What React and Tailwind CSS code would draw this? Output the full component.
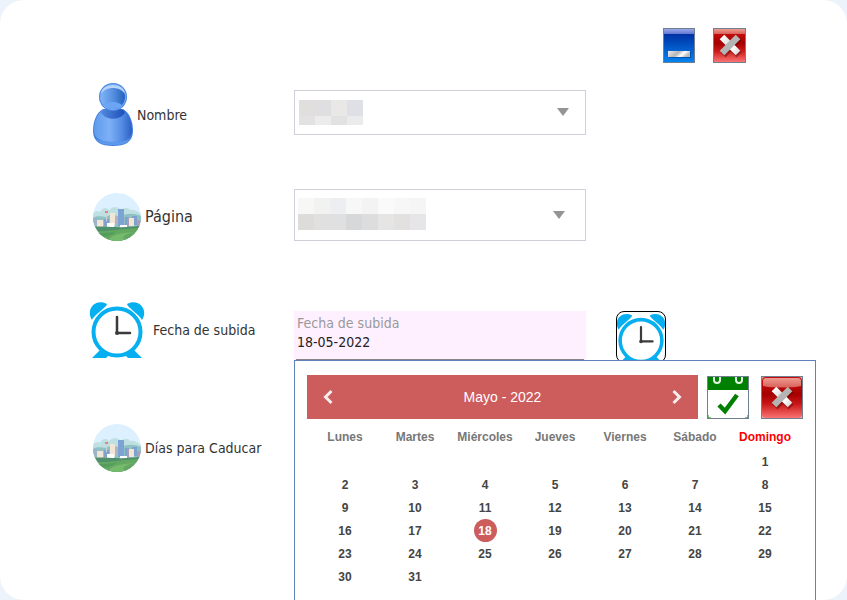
import React from "react";

const WEEKDAYS = ["Lunes", "Martes", "Miércoles", "Jueves", "Viernes", "Sábado", "Domingo"];

const WEEKS = [
  [null, null, null, null, null, null, 1],
  [2, 3, 4, 5, 6, 7, 8],
  [9, 10, 11, 12, 13, 14, 15],
  [16, 17, 18, 19, 20, 21, 22],
  [23, 24, 25, 26, 27, 28, 29],
  [30, 31, null, null, null, null, null],
];

const SELECTED_DAY = 18;

function PersonIcon() {
  return (
    <svg className="h-16 w-11 shrink-0" viewBox="0 0 44 64" aria-hidden="true">
      <defs>
        <linearGradient id="body" x1="0" x2="1">
          <stop offset="0" stopColor="#5f9bee" />
          <stop offset="0.4" stopColor="#7db0f6" />
          <stop offset="0.7" stopColor="#5990e6" />
          <stop offset="1" stopColor="#2a60c4" />
        </linearGradient>
        <linearGradient id="neck" x1="0" x2="1">
          <stop offset="0" stopColor="#5289df" />
          <stop offset="1" stopColor="#1c4fb8" />
        </linearGradient>
        <linearGradient id="face" x1="0" x2="1">
          <stop offset="0" stopColor="#7db2f7" />
          <stop offset="0.5" stopColor="#5590e0" />
          <stop offset="1" stopColor="#2560bd" />
        </linearGradient>
      </defs>
      <path d="M14 26C7 30 4 39 4 48c0 11 8 15 20 15s20-4 20-15c0-9-3-18-10-22Z" fill="#4580de" />
      <path d="M14 27C8 31 5 39 5 48c0 8 8 11 19 11s19-3 19-11c0-9-3-17-9-21Z" fill="url(#body)" />
      <path d="M7 56c6 4 28 4 34 0-3 5-9 6-17 6s-14-1-17-6Z" fill="#5c98ec" />
      <path d="M14 27c5-2 15-2 20 0 3 2 2 3 0 5-5 5-15 5-20 0-2-2-3-3 0-5Z" fill="url(#neck)" />
      <circle cx="24" cy="14" r="14" fill="#4a86e0" />
      <circle cx="24" cy="14" r="13" fill="#78adf5" />
      <circle cx="24" cy="14" r="12" fill="url(#face)" />
      <path d="M12 11C13-1 35-1 36 11 31 3 17 3 12 11Z" fill="#b5d5fd" />
      <path d="M15 22c5-4 13-4 18 0-4 5-14 5-18 0Z" fill="#6ba6f6" />
    </svg>
  );
}

function CityIcon({ clip }) {
  return (
    <svg className="h-12 w-[52px] shrink-0" viewBox="0 0 52 48" aria-hidden="true">
      <clipPath id={clip}>
        <circle cx="28" cy="24" r="24" />
      </clipPath>
      <g clipPath={`url(#${clip})`}>
        <path d="M4 0h48v48H4z" fill="#ddf0ff" />
        <path d="M4 20c3-2 5-3 7-1 2-5 7-5 9-2 4-4 8-4 12 0 4-3 7-3 9 0 4-1 7 1 11 4v14H4Z" fill="#bfe0e2" />
        <path d="M4 25c5-3 9-1 13-1 5-3 9-2 14 0 6-4 14-4 21-1v12H4Z" fill="#8fc2c2" />
        <path d="M4 25h4v9H4z" fill="#9bb4c8" />
        <path d="M12 28h6v6h-6z" fill="#c3b3ab" />
        <path d="M15 26h5v7h-5zM36 24h4v9h-4zM43 23h5v9h-5z" fill="#7fa1d0" />
        <path d="M38 25h3v9h-3zM48 27h4v8h-4z" fill="#a8a0b4" />
        <path d="M8 27h6v7H8zM21 20h5v13h-5zM40 25h5v8h-5z" fill="#f1e6d5" />
        <path d="M26 23h3v8h-3z" fill="#b5b4bd" />
        <path d="M29 16h6v17h-6z" fill="#7da3d5" />
        <path d="M17 19h1v9h-1z" fill="#c8d4da" />
        <path d="M16 18h3v2h-3z" fill="#e9827c" />
        <path d="M18 30h7v4h-7zM31 32h7v3h-7z" fill="#fff" />
        <path d="M4 34c8-1 14 0 24 0 8 1 16-1 24-1v15H4Z" fill="#4f8f6b" />
        <path d="M4 38c14 1 32-3 48-3v13H4Z" fill="#62a860" />
        <path d="M20 46c4-5 14-6 26-7-10 2-14 4-10 9H20Z" fill="#76ba6b" />
        <path d="M4 40c12 0 18 0 24-2-6 6-14 6-22 5Z" fill="#549d5b" />
      </g>
    </svg>
  );
}

function ClockArt() {
  return (
    <>
      <g fill="#06aff0">
        <path d="M3 19C-4 8 7-3 18 3 18 6 5 14 3 19Z" />
        <path d="M53 19C60 8 49-3 38 3 38 6 51 14 53 19Z" />
        <path d="M12 48 3 57h14l4-4ZM44 48l9 9H39l-4-4Z" />
      </g>
      <circle cx="28" cy="31" r="23.500" fill="#fff" stroke="#06aff0" strokeWidth="4" />
      <path d="M28 16v16h13" fill="none" stroke="#3b3b3d" strokeWidth="2.500" strokeLinecap="round" strokeLinejoin="round" />
      <circle cx="28" cy="32" r="2" fill="#3b3b3d" />
    </>
  );
}

function ClockIcon() {
  return (
    <svg className="h-[58px] w-[60px] shrink-0" viewBox="0 0 60 58" aria-hidden="true">
      <ClockArt />
    </svg>
  );
}

function RedGradients({ id }) {
  return (
    <defs>
      <linearGradient id={id} x2="0" y2="1">
        <stop offset="0.16" stopColor="#c30b0b" />
        <stop offset="0.42" stopColor="#a50000" />
        <stop offset="0.65" stopColor="#c81616" />
        <stop offset="1" stopColor="#fb7272" />
      </linearGradient>
      <linearGradient id={`${id}-gloss`} x2="0" y2="1">
        <stop offset="0" stopColor="#ef9a90" />
        <stop offset="1" stopColor="#d8625a" />
      </linearGradient>
      <linearGradient id={`${id}-light`} x2="1" y2="1">
        <stop offset="0" stopColor="#fff" />
        <stop offset="0.35" stopColor="#e2e2e2" />
        <stop offset="0.7" stopColor="#fff" />
        <stop offset="1" stopColor="#dcdcdc" />
      </linearGradient>
    </defs>
  );
}

/* Metal cross centred on the origin, 22 units wide. */
function MetalCross({ id }) {
  return (
    <>
      <path d="m-7 -7 16 17M9-7-7 10" stroke="#5e0000" strokeOpacity="0.45" strokeWidth="7" />
      <path d="M-8-8 8 8" stroke={`url(#${id}-light)`} strokeWidth="6.500" />
      <path d="M8-8-8 8" stroke="#b4b4b4" strokeWidth="6.500" />
    </>
  );
}

function CloseArt() {
  return (
    <svg className="block h-full w-full" viewBox="0 0 31 33" aria-hidden="true">
      <RedGradients id="close" />
      <path d="M0 0h31v33H0z" fill="url(#close)" />
      <path d="M0 0h31v5H0z" fill="url(#close-gloss)" />
      <g transform="translate(16 16)">
        <MetalCross id="close" />
      </g>
    </svg>
  );
}

function CancelArt() {
  return (
    <svg className="block h-full w-full" viewBox="0 0 40 41" aria-hidden="true">
      <RedGradients id="cancel" />
      <path d="M0 0h40v41H0z" fill="#e3a9a7" />
      <rect width="40" height="41" rx="4" fill="url(#cancel)" />
      <path d="M4 1h32c2 0 3 1 3 3v5c-8 2-30 2-38 0V4c0-2 1-3 3-3Z" fill="url(#cancel-gloss)" />
      <g transform="translate(20 20)">
        <MetalCross id="cancel" />
      </g>
    </svg>
  );
}

function MinimizeArt() {
  return (
    <svg className="block h-full w-full" viewBox="0 0 30 33" preserveAspectRatio="none" aria-hidden="true">
      <defs>
        <linearGradient id="min" x2="0" y2="1">
          <stop offset="0.15" stopColor="#0031a5" />
          <stop offset="1" stopColor="#0583ee" />
        </linearGradient>
        <linearGradient id="min-gloss" x2="0" y2="1">
          <stop offset="0" stopColor="#98a6ea" />
          <stop offset="1" stopColor="#6478d0" />
        </linearGradient>
        <linearGradient id="min-bar" x2="1" y2="0.300">
          <stop offset="0" stopColor="#eee" />
          <stop offset="0.5" stopColor="#b5b5b5" />
          <stop offset="0.75" stopColor="#fff" />
          <stop offset="1" stopColor="#bbb" />
        </linearGradient>
      </defs>
      <path d="M0 0h30v33H0z" fill="url(#min)" />
      <path d="M0 0h30v5H0z" fill="url(#min-gloss)" />
      <path d="M5 23h22v6H5z" fill="#003d91" fillOpacity="0.6" />
      <path d="M4 22h22v6H4z" fill="url(#min-bar)" />
    </svg>
  );
}

function CalendarCheckArt() {
  return (
    <svg className="block h-full w-full" viewBox="0 0 40 41" aria-hidden="true">
      <path d="M0 0h40v41H0z" fill="#fff" />
      <path d="M0 0h40v13H0z" fill="#008000" />
      <path d="M6 0v3a3 3 0 0 0 6 0V0M28 0v3a3 3 0 0 0 6 0V0" fill="none" stroke="#e3f3e3" strokeWidth="2" />
      <path d="m11 28 6 6L29 18" fill="none" stroke="#008000" strokeWidth="4.500" />
      <path d="M0 38v3h3M37 41h3v-3" fill="none" stroke="#008000" strokeWidth="1" />
    </svg>
  );
}

function Combo({ id, className, arrowClassName, children }) {
  return (
    <div className={`relative border border-[#cfd0d9] ${className}`}>
      <select id={id} className="block h-full w-full appearance-none bg-white outline-none">
        <option aria-label="Valor oculto" />
      </select>
      {children}
      <svg
        className={`pointer-events-none absolute h-2 w-3 ${arrowClassName}`}
        viewBox="0 0 12 8"
        aria-hidden="true"
      >
        <path d="M0 0h12L6 8Z" fill="#949494" />
      </svg>
    </div>
  );
}

function Calendar() {
  return (
    <section
      aria-label="Calendario"
      className="absolute left-0 top-[49px] z-10 w-[522px] border border-[#5f7fbf] bg-white px-3 pb-6 pt-[14px] font-['Liberation_Sans',Arial,sans-serif]"
    >
      <div className="flex items-center">
        <div className="mr-[9px] flex h-11 flex-1 items-center justify-between bg-[#cd5c5c] px-4 text-white">
          <button type="button" aria-label="Mes anterior">
            <svg className="h-4 w-2.5" viewBox="0 0 10 16" aria-hidden="true">
              <path d="M8.500 2 2.500 8l6 6" fill="none" stroke="#f5eeee" strokeWidth="3" />
            </svg>
          </button>
          <h2 className="text-sm">Mayo - 2022</h2>
          <button type="button" aria-label="Mes siguiente">
            <svg className="h-4 w-2.5" viewBox="0 0 10 16" aria-hidden="true">
              <path d="m1.500 2 6 6-6 6" fill="none" stroke="#f5eeee" strokeWidth="3" />
            </svg>
          </button>
        </div>
        <button type="button" aria-label="Aceptar" className="mr-3 h-[43px] w-[42px] border border-[#708090]">
          <CalendarCheckArt />
        </button>
        <button type="button" aria-label="Cancelar" className="h-[43px] w-[42px] border border-[#708090]">
          <CancelArt />
        </button>
      </div>
      <table className="mx-auto mt-1 w-[490px] table-fixed border-collapse text-center text-xs font-bold text-[#444]">
        <thead>
          <tr className="h-[27px] text-[#777]">
            {WEEKDAYS.map((day) => (
              <th key={day} scope="col" className={`p-0 ${day === "Domingo" ? "text-[#f00]" : ""}`}>
                {day}
              </th>
            ))}
          </tr>
        </thead>
        <tbody>
          {WEEKS.map((week, row) => (
            <tr key={row} className="h-[23px]">
              {week.map((day, col) => (
                <td key={col} className="p-0">
                  {day && (
                    <button
                      type="button"
                      className={`mx-auto block size-[23px] rounded-full ${
                        day === SELECTED_DAY ? "bg-[#cd5c5c] text-white" : ""
                      }`}
                    >
                      {day}
                    </button>
                  )}
                </td>
              ))}
            </tr>
          ))}
        </tbody>
      </table>
    </section>
  );
}

export default function App() {
  return (
    <div className="min-h-screen bg-[#edf3fa] font-['DejaVu_Sans_Condensed','Noto_Sans',sans-serif] text-[#333]">
      <main className="min-h-screen overflow-hidden rounded-3xl bg-white">
        <header className="flex justify-end gap-[18px] pr-[101px] pt-7">
          <button type="button" aria-label="Minimizar" className="h-[35px] w-8 border border-[#708090]">
            <MinimizeArt />
          </button>
          <button type="button" aria-label="Cerrar" className="h-[35px] w-[33px] border border-[#708090]">
            <CloseArt />
          </button>
        </header>

        <form className="flex pl-[89px]" onSubmit={(event) => event.preventDefault()}>
          <div className="flex w-[205px] shrink-0 flex-col whitespace-nowrap pt-5 text-sm">
            <label htmlFor="nombre" className="flex items-center gap-1">
              <PersonIcon />
              Nombre
            </label>
            <label htmlFor="pagina" className="mt-[46px] flex items-center gap-1 text-base">
              <CityIcon clip="city-page" />
              Página
            </label>
            <label htmlFor="fecha" className="mt-[60px] flex items-center gap-1">
              <ClockIcon />
              Fecha de subida
            </label>
            <div className="mt-[65px] flex items-center gap-1">
              <CityIcon clip="city-days" />
              Días para Caducar
            </div>
          </div>

          <div className="flex flex-col pt-[27px]">
            <Combo id="nombre" className="h-[45px] w-[292px]" arrowClassName="right-4 top-[17px]">
              <div className="pointer-events-none absolute left-1 top-[9px] grid grid-cols-[repeat(4,16px)] grid-rows-[16px_9px]">
                <span className="bg-[#e0dfdd]" />
                <span className="bg-[#dfdfe2]" />
                <span className="bg-[#e9e8e6]" />
                <span className="bg-[#dfe0e5]" />
                <span className="bg-[#e2e2e2]" />
                <span className="bg-[#ececec]" />
                <span className="bg-[#e2e2e2]" />
                <span className="bg-[#ebebeb]" />
              </div>
            </Combo>

            <Combo id="pagina" className="mt-[54px] h-[52px] w-[292px]" arrowClassName="right-5 top-[21px]">
              <div className="pointer-events-none absolute left-[3px] top-2 grid grid-cols-[repeat(8,16px)] grid-rows-[16px_16px]">
                <span className="bg-[#f7f7f7]" />
                <span className="bg-[#f2f2f0]" />
                <span className="bg-[#edeef1]" />
                <span className="bg-[#f7f7f7]" />
                <span className="bg-[#f3f3f3]" />
                <span className="bg-[#fafafa]" />
                <span className="bg-[#f7f7f7]" />
                <span className="bg-[#f5f5f5]" />
                <span className="bg-[#dddcda]" />
                <span className="bg-[#e0e0e0]" />
                <span className="bg-[#e0e0e0]" />
                <span className="bg-[#d7d8da]" />
                <span className="bg-[#dddddd]" />
                <span className="bg-[#e5e5e5]" />
                <span className="bg-[#e2e1df]" />
                <span className="bg-[#e6e6e9]" />
              </div>
            </Combo>

            <div className="relative mt-[70px] flex gap-[30px]">
              <div className="h-[50px] w-[292px] bg-[#fff0ff] px-0.5 pt-[3px] text-sm">
                <label htmlFor="fecha" className="block h-[18px] px-px leading-[18px] text-[#999]">
                  Fecha de subida
                </label>
                <input
                  id="fecha"
                  type="text"
                  defaultValue="18-05-2022"
                  className="block h-7 w-full border-b border-[#888] bg-transparent px-px pb-2 leading-[18px] text-[#222] outline-none"
                />
              </div>
              <button
                type="button"
                aria-label="Abrir calendario"
                className="h-[52px] w-[50px] overflow-hidden rounded-lg border border-black"
              >
                <svg className="block h-full w-full" viewBox="1 -1 54 56" preserveAspectRatio="none" aria-hidden="true">
                  <ClockArt />
                </svg>
              </button>
              <Calendar />
            </div>
          </div>
        </form>
      </main>
    </div>
  );
}
